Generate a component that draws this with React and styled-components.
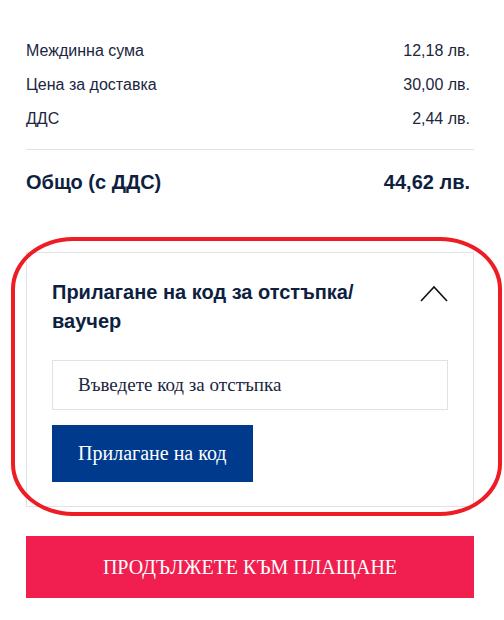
import styled, { createGlobalStyle } from "styled-components";

const GlobalStyle = createGlobalStyle`
    body {
        margin: 0;
        background: #fff;
    }
`;

const Page = styled.div`
    width: 504px;
    padding: 40px 30px 0 26px;
    box-sizing: border-box;
    font-family: "Liberation Sans", Arial, sans-serif;
    color: #0e1f3f;
`;

const Rows = styled.div`
    display: flex;
    flex-direction: column;
    gap: 12px;
    padding-bottom: 19px;
    border-bottom: 1px solid #e2e2e2;
`;

const Row = styled.div`
    display: flex;
    justify-content: space-between;
    align-items: center;
    padding-right: 4px;
    font-size: 16px;
    line-height: 22px;
    color: #1b2640;
`;

const TotalRow = styled.div`
    display: flex;
    justify-content: space-between;
    align-items: center;
    padding: 20px 4px 0 0;
    font-size: 20px;
    font-weight: 700;
    line-height: 24px;
    color: #0e1f3f;
`;

const VoucherWrap = styled.div`
    position: relative;
    margin-top: 58px;
`;

const Highlight = styled.div`
    position: absolute;
    left: -15px;
    right: -28px;
    top: -15px;
    bottom: -9px;
    border: 4px solid #ee1d25;
    border-radius: 62px / 52px;
    pointer-events: none;
`;

const Card = styled.div`
    border: 1px solid #e2e2e2;
    padding: 25px 25px 24px;
`;

const Header = styled.div`
    display: flex;
    justify-content: space-between;
    align-items: flex-start;
`;

const Title = styled.h2`
    margin: 0;
    font-size: 20px;
    font-weight: 700;
    line-height: 29px;
    color: #0e1f3f;
    max-width: 330px;
`;

const Chevron = styled.svg`
    margin-top: 7px;
    flex-shrink: 0;
`;

const CodeInput = styled.input`
    display: block;
    width: 100%;
    box-sizing: border-box;
    height: 50px;
    margin-top: 24px;
    padding: 0 25px;
    border: 1px solid #e2e2e2;
    font-family: "Liberation Serif", "Times New Roman", serif;
    font-size: 19px;
    color: #1b2640;
    outline: none;

    &::placeholder {
        color: #1b2640;
        opacity: 1;
    }
`;

const ApplyButton = styled.button`
    margin-top: 15px;
    height: 57px;
    padding: 0 26px;
    background: #003a8c;
    color: #fff;
    border: none;
    font-family: "Liberation Serif", "Times New Roman", serif;
    font-size: 20px;
    cursor: pointer;
`;

const CheckoutButton = styled.button`
    display: block;
    width: 100%;
    height: 62px;
    margin-top: 29px;
    background: #f01f4f;
    color: #fff;
    border: none;
    font-family: "Liberation Serif", "Times New Roman", serif;
    font-size: 20px;
    text-transform: uppercase;
    cursor: pointer;
`;

const rows = [
    ["Междинна сума", "12,18 лв."],
    ["Цена за доставка", "30,00 лв."],
    ["ДДС", "2,44 лв."],
];

export default function App() {
    return (
        <>
            <GlobalStyle />
            <Page>
                <Rows>
                    {rows.map(([label, value]) => (
                        <Row key={label}>
                            <span>{label}</span>
                            <span>{value}</span>
                        </Row>
                    ))}
                </Rows>
                <TotalRow>
                    <span>Общо (с ДДС)</span>
                    <span>44,62 лв.</span>
                </TotalRow>

                <VoucherWrap>
                    <Card>
                        <Header>
                            <Title>Прилагане на код за отстъпка/ ваучер</Title>
                            <Chevron width="28" height="17" viewBox="0 0 28 17">
                                <path
                                    d="M1 16 L14 2 L27 16"
                                    fill="none"
                                    stroke="#111"
                                    strokeWidth="1.6"
                                />
                            </Chevron>
                        </Header>
                        <CodeInput placeholder="Въведете код за отстъпка" />
                        <ApplyButton>Прилагане на код</ApplyButton>
                    </Card>
                    <Highlight />
                </VoucherWrap>

                <CheckoutButton>Продължете към плащане</CheckoutButton>
            </Page>
        </>
    );
}
